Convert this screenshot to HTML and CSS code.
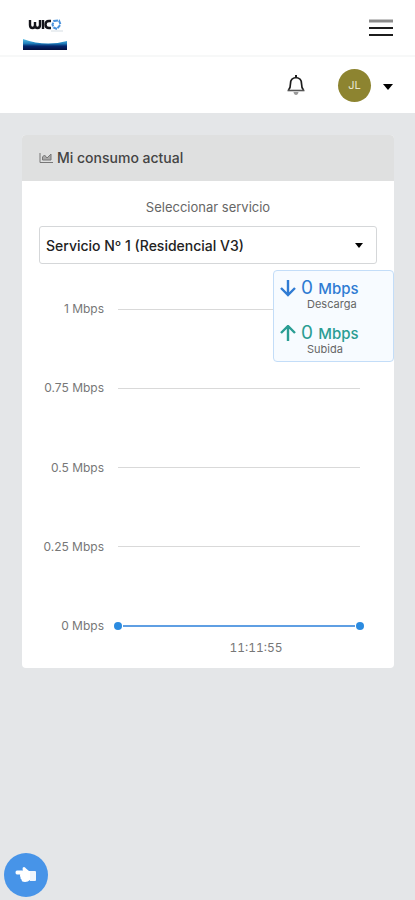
FILE: index.html
```html
<!DOCTYPE html>
<html lang="es">
<head>
    <meta charset="UTF-8">
    <meta name="viewport" content="width=device-width, initial-scale=1.0">
    <title>Mi consumo</title>
    <link rel="stylesheet" href="styles.css">
</head>
<body>

<header class="topbar">
    <a class="logo" href="#" aria-label="Wico">
        <svg width="46" height="46" viewBox="0 0 46 46">
            <defs>
                <linearGradient id="wave" x1="0" y1="0" x2="0" y2="1">
                    <stop offset="0" stop-color="#5cc0e4"/>
                    <stop offset="0.4" stop-color="#1f7fbd"/>
                    <stop offset="0.65" stop-color="#04246a"/>
                    <stop offset="1" stop-color="#04103f"/>
                </linearGradient>
            </defs>
            <g fill="none" stroke="#15151b" stroke-width="2.4">
                <path d="M8 15v5q0 3 2.500 3T13 20v-3M13 20q0 3 2.500 3T18 20v-5"/>
                <path d="M21 15v9"/>
                <path d="M29 16h-2q-3.500 0-3.500 3.500T27 23h2"/>
            </g>
            <path d="M32 16l5-.5 1.500 4-3.500 4.500-3.500-1.500-1-3z" fill="none" stroke="#4b93dc" stroke-width="2" stroke-dasharray="4 1"/>
            <path d="M29 26h12" stroke="#d5dde3" stroke-width="1"/>
            <path d="M1 34q22 8 44 2v9H1z" fill="url(#wave)"/>
        </svg>
    </a>
    <button class="icon-button" type="button" aria-label="Abrir menú">
        <svg width="24" height="18" viewBox="0 0 24 18">
            <path d="M0 2h24" stroke="#8c8c8c" stroke-width="3"/>
            <path d="M0 9h24M0 16h24" stroke="#1c1c1c" stroke-width="2"/>
        </svg>
    </button>
</header>

<nav class="userbar">
    <button class="icon-button" type="button" aria-label="Notificaciones">
        <svg width="20" height="22" viewBox="0 0 20 22">
            <path d="M2.500 16Q4.500 14 4.500 9.500Q4.500 4 10 3.500Q15.500 4 15.500 9.500Q15.500 14 17.500 16" fill="none" stroke="#1c1c1c" stroke-width="1.700"/>
            <path d="M10 1v3" stroke="#1c1c1c" stroke-width="2"/>
            <path d="M1.500 16.500h17" stroke="#555" stroke-width="1.600"/>
            <path d="M7.500 18h5q-.5 3-2.500 3t-2.500-3z" fill="#999"/>
        </svg>
    </button>
    <button class="user-menu" type="button">
        <span class="avatar">JL</span>
        <svg class="caret" width="10" height="6" viewBox="0 0 10 6"><path d="M0 0h10L5 6z"/></svg>
    </button>
</nav>

<main class="content">
    <section class="card">
        <h2 class="card-header">
            <svg width="14" height="12" viewBox="0 0 14 12" fill="none" stroke="#777">
                <path d="M1 1v9.500h13"/>
                <path d="M3.500 8V5l2-2 2.500 3 4-4v6z" fill="#aaa"/>
            </svg>
            Mi consumo actual
        </h2>

        <div class="card-body">
            <label class="service-label" for="servicio">Seleccionar servicio</label>
            <div class="service-field">
                <select class="service-select" id="servicio" name="servicio">
                    <option>Servicio Nº 1 (Residencial V3)</option>
                </select>
                <svg class="select-arrow" width="8" height="5" viewBox="0 0 8 5"><path d="M0 0h8L4 5z"/></svg>
            </div>
        </div>

        <div class="chart">
            <div class="chart-rows">
                <div class="chart-row"><span class="tick">1 Mbps</span><span class="grid-line"></span></div>
                <div class="chart-row"><span class="tick">0.75 Mbps</span><span class="grid-line"></span></div>
                <div class="chart-row"><span class="tick">0.5 Mbps</span><span class="grid-line"></span></div>
                <div class="chart-row"><span class="tick">0.25 Mbps</span><span class="grid-line"></span></div>
                <div class="chart-row">
                    <span class="tick">0 Mbps</span>
                    <span class="series"><i class="dot"></i><i class="series-line"></i><i class="dot"></i></span>
                </div>
            </div>
            <div class="time">11:11:55</div>

            <div class="stats">
                <div class="stat download">
                    <svg width="16" height="18" viewBox="0 0 16 18"><path d="M8 0v15M1 8l7 7 7-7"/></svg>
                    <span class="value">0 <small>Mbps</small></span>
                    <span class="caption">Descarga</span>
                </div>
                <div class="stat upload">
                    <svg width="16" height="18" viewBox="0 0 16 18"><path d="M8 16V1M1 8l7-7 7 7"/></svg>
                    <span class="value">0 <small>Mbps</small></span>
                    <span class="caption">Subida</span>
                </div>
            </div>
        </div>
    </section>
</main>

<button class="help-button" type="button" aria-label="Ayuda">
    <svg width="22" height="18" viewBox="0 0 22 18" fill="#fff">
        <path d="M2 4.500h6l-.5-1.500q0-2 1.500-2 1.200 0 2 1.500l3 2.500h1v9q-2 2-5 2-3.500 0-3.500-2.500-1.500-.8-1-2.500-1-1-.3-2.500H2Q.5 8.500.5 6.500T2 4.500z"/>
        <path d="M15 5h5q1 0 1 1v8q0 1-1 1h-5z" opacity="0.9"/>
    </svg>
</button>

</body>
</html>
```
FILE: styles.css
```css
* {
    box-sizing: border-box;
}
body {
    font-family: Inter, sans-serif;
    font-size: 13px;
    line-height: 16px;
    color: #444;
    background-color: #e4e6e8;
    min-height: 100vh;
    margin: 0;
}
button {
    font-family: inherit;
    padding: 0;
    border: none;
    background: none;
    cursor: pointer;
}
svg {
    display: block;
    flex-shrink: 0;
}
.topbar {
    display: flex;
    justify-content: space-between;
    align-items: center;
    height: 57px;
    padding: 0 22px;
    background-color: #fff;
    border-bottom: 2px solid #f7f8f8;
}
.userbar {
    display: flex;
    justify-content: flex-end;
    align-items: center;
    gap: 32px;
    height: 56px;
    padding: 0 22px;
    background-color: #fff;
}
.user-menu {
    display: flex;
    align-items: center;
    gap: 12px;
}
.avatar {
    width: 33px;
    height: 33px;
    border-radius: 50%;
    background-color: #8d8430;
    color: #e8e5d0;
    font-size: 11px;
    line-height: 33px;
    text-align: center;
}
.caret {
    margin-top: 4px;
}
.content {
    padding: 22px 21px 22px 22px;
}
.card {
    background-color: #fff;
    border-radius: 4px;
}
.card-header {
    display: flex;
    align-items: center;
    gap: 4px;
    height: 46px;
    margin: 0;
    padding: 0 17px;
    border-radius: 4px 4px 0 0;
    background-color: #dfe0e0;
    color: #444;
    font-size: 14px;
    font-weight: 500;
}
.card-body {
    padding: 18px 17px 0;
}
.service-label {
    display: block;
    margin-bottom: 11px;
    color: #666;
    text-align: center;
}
.service-field {
    position: relative;
}
.service-select {
    appearance: none;
    display: block;
    width: 100%;
    height: 38px;
    padding: 0 6px;
    border: 1px solid #d5d7d9;
    border-radius: 3px;
    background-color: #fff;
    color: #222;
    font-family: inherit;
    font-size: 14px;
    font-weight: 500;
}
.select-arrow {
    position: absolute;
    top: 17px;
    right: 14px;
    pointer-events: none;
}
.chart {
    position: relative;
    padding: 37px 0 12px 17px;
}
.chart-rows {
    display: flex;
    flex-direction: column;
    justify-content: space-between;
    height: 333px;
    padding-right: 34px;
}
.chart-row {
    display: flex;
    align-items: center;
    gap: 14px;
}
.tick {
    width: 65px;
    color: #777;
    font-size: 12px;
    text-align: right;
    white-space: nowrap;
}
.grid-line {
    flex: 1;
    height: 1px;
    background-color: #d9d9d9;
}
.series {
    display: flex;
    align-items: center;
    gap: 1px;
    flex: 1;
    margin: 0 -4px;
}
.dot {
    width: 8px;
    height: 8px;
    border-radius: 50%;
    background-color: #2b8be0;
}
.series-line {
    flex: 1;
    height: 2px;
    background-color: #5f9fe3;
}
.time {
    padding: 6px 0 0 79px;
    color: #777;
    font-size: 12px;
    font-variant-numeric: tabular-nums;
    text-align: center;
}
.stats {
    position: absolute;
    top: 6px;
    right: 0;
    width: 121px;
    padding: 7px 6px;
    border: 1px solid #c3ddf8;
    border-radius: 4px;
    background-color: #f7fbff;
}
.stat {
    display: grid;
    grid-template-columns: 16px 1fr;
    column-gap: 5px;
    align-items: center;
}
.stat + .stat {
    margin-top: 14px;
}
.stat path {
    fill: none;
    stroke: currentColor;
    stroke-width: 2.4;
}
.download {
    color: #2f7bd3;
}
.upload {
    color: #2a9d93;
}
.value {
    font-size: 19px;
    line-height: 20px;
}
.value small {
    font-size: 15px;
    font-weight: 500;
}
.caption {
    grid-column: 2;
    padding-left: 6px;
    color: #666;
    font-size: 11px;
    line-height: 10px;
}
.help-button {
    position: fixed;
    bottom: 3px;
    left: 4px;
    display: flex;
    justify-content: center;
    align-items: center;
    width: 44px;
    height: 44px;
    border-radius: 50%;
    background-color: #4794e8;
}
```
